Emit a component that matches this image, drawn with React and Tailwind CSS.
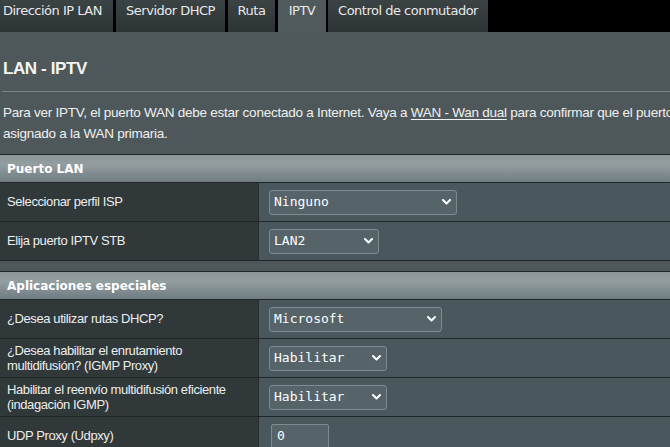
import React from "react";

function Chevron() {
  return (
    <svg width="9" height="6" viewBox="0 0 9 6" className="shrink-0">
      <path d="M1 1 L4.5 4.5 L8 1" stroke="#ffffff" strokeWidth="2" fill="none" strokeLinecap="round" strokeLinejoin="round" />
    </svg>
  );
}

function Select({ value, w }) {
  return (
    <div
      className={`flex h-[25px] items-center justify-between rounded-[3px] border border-[#7f8b8e] bg-[#56646a] pl-[4px] pr-[5px] font-['DejaVu_Sans_Mono',monospace] text-[13px] text-white ${w}`}
    >
      <span>{value}</span>
      <Chevron />
    </div>
  );
}

function Row({ label, children, two }) {
  return (
    <div className="flex h-[39px] border-b border-[#1f2628]">
      <div
        className={`flex w-[259px] shrink-0 items-center border-r border-[#262e30] bg-[#30383a] pl-[7px] text-[13px] tracking-[-0.4px] text-[#ededed] ${two ? "leading-[15px]" : "leading-[16px]"}`}
      >
        <div>{label}</div>
      </div>
      <div className="flex flex-1 items-center bg-[#4a575c] pl-[10px]">{children}</div>
    </div>
  );
}

function Header({ title }) {
  return (
    <div className="flex h-[28px] items-center border-b border-[#1f2628] bg-[linear-gradient(180deg,#8b9699_0%,#939ea0_35%,#7f8b8f_70%,#6f7c81_100%)] pl-[7px] font-['DejaVu_Sans',sans-serif] text-[12px] font-bold text-white">
      {title}
    </div>
  );
}

export default function App() {
  const tabBase =
    "flex h-[32px] items-start pt-[3px] bg-[linear-gradient(180deg,#3b4345_0%,#323a3c_60%,#2c3436_100%)]";
  return (
    <div className="h-[447px] w-[670px] overflow-hidden bg-[#4e585a] font-['Liberation_Sans',Arial,sans-serif] text-[#efefef]">
      <div className="w-[800px]">
        {/* Tabs */}
        <div className="flex h-[32px] bg-black font-['DejaVu_Sans',sans-serif] text-[13px] leading-[16px] tracking-[-0.5px] text-[#e9e9e9]">
          <div className={`${tabBase} w-[113px] pl-[3px]`}>Dirección IP LAN</div>
          <div className={`${tabBase} ml-[3px] w-[109px] justify-center`}>Servidor DHCP</div>
          <div className={`${tabBase} ml-[3px] w-[47px] justify-center`}>Ruta</div>
          <div className="ml-[3px] flex h-[32px] w-[48px] items-start justify-center bg-[#515b5d] pt-[3px]">IPTV</div>
          <div className={`${tabBase} ml-[2px] w-[160px] justify-center`}>Control de conmutador</div>
        </div>

        {/* Title */}
        <div className="mt-[27px] pl-[3px] text-[17px] font-bold leading-[20px] tracking-[-0.4px] text-[#f4f4f4]">
          LAN - IPTV
        </div>
        <div className="ml-[2px] mt-[12px] h-px bg-[#7a8486]" />

        {/* Description */}
        <div className="mt-[10px] whitespace-nowrap pl-[3px] text-[13.5px] leading-[21px] tracking-[-0.25px] text-[#f0f0f0]">
          Para ver IPTV, el puerto WAN debe estar conectado a Internet. Vaya a{" "}
          <span className="underline underline-offset-2">WAN - Wan dual</span> para confirmar que el puerto
          <br />
          asignado a la WAN primaria.
        </div>

        {/* Table 1 */}
        <div className="mt-[10px] border-t border-[#1f2628]">
          <Header title="Puerto LAN" />
          <Row label="Seleccionar perfil ISP">
            <Select value="Ninguno" w="w-[188px]" />
          </Row>
          <Row label="Elija puerto IPTV STB">
            <Select value="LAN2" w="w-[110px]" />
          </Row>
        </div>

        {/* Table 2 */}
        <div className="mt-[10px] border-t border-[#1f2628]">
          <Header title="Aplicaciones especiales" />
          <Row label="¿Desea utilizar rutas DHCP?">
            <Select value="Microsoft" w="w-[173px]" />
          </Row>
          <Row
            two
            label={
              <>
                ¿Desea habilitar el enrutamiento
                <br />
                multidifusión? (IGMP Proxy)
              </>
            }
          >
            <Select value="Habilitar" w="w-[118px]" />
          </Row>
          <Row
            two
            label={
              <>
                Habilitar el reenvío multidifusión eficiente
                <br />
                (indagación IGMP)
              </>
            }
          >
            <Select value="Habilitar" w="w-[118px]" />
          </Row>
          <Row label="UDP Proxy (Udpxy)">
            <div className="ml-[2px] flex h-[25px] w-[58px] items-center rounded-[2px] border border-[#7f8b8e] bg-[#56646a] pl-[5px] font-['DejaVu_Sans_Mono',monospace] text-[13px] text-white">
              0
            </div>
          </Row>
        </div>
      </div>
    </div>
  );
}
